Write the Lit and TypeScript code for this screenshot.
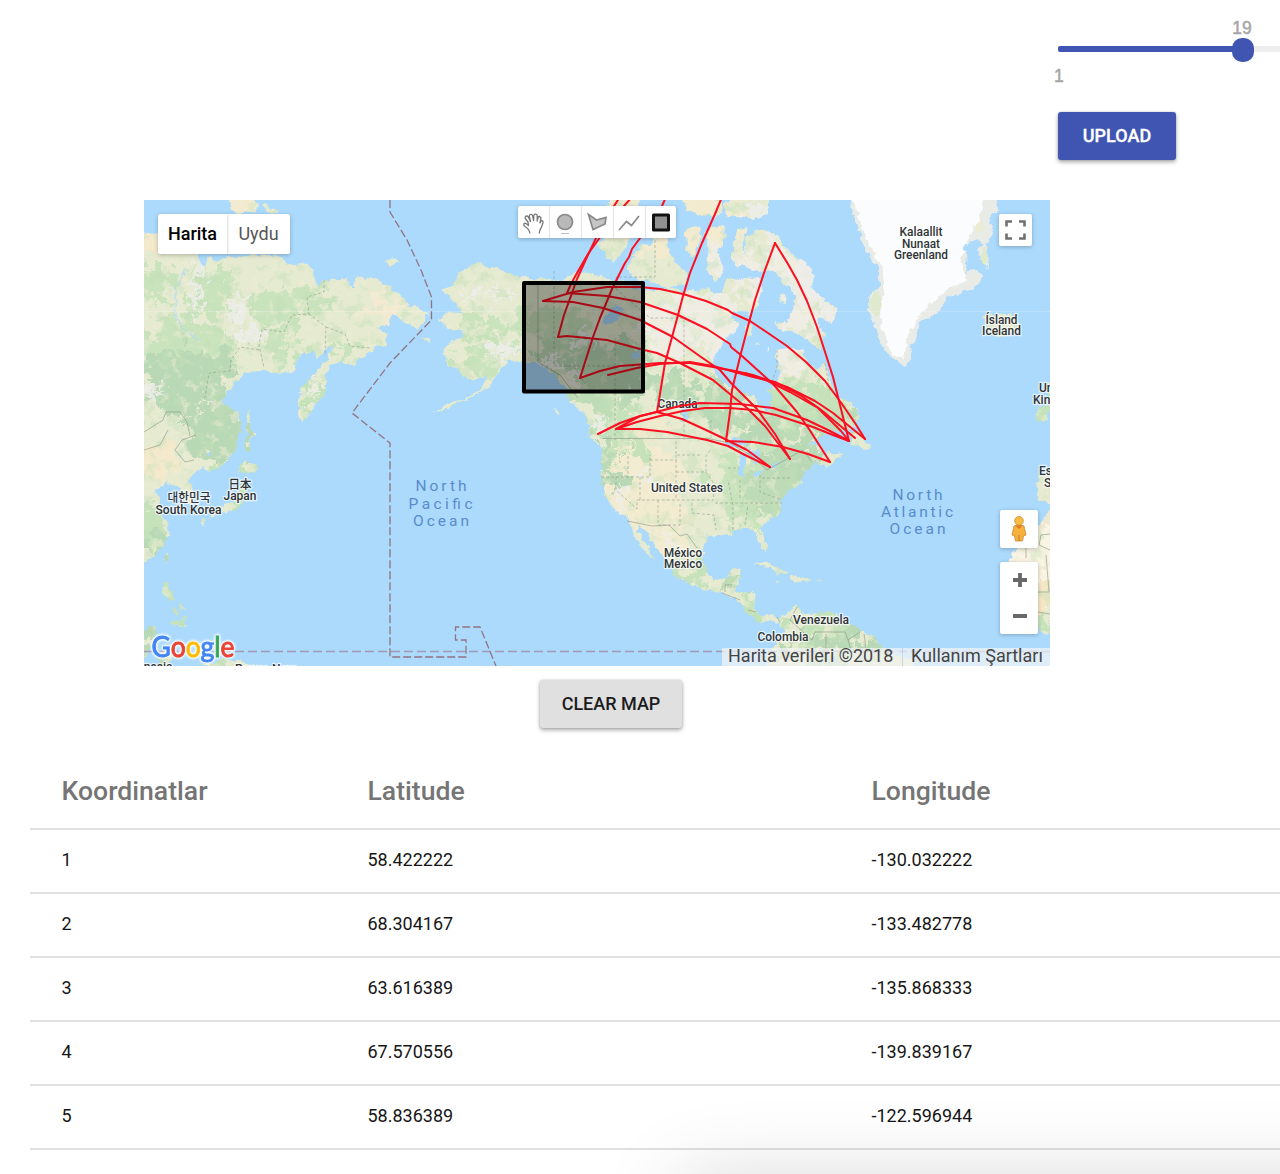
import { LitElement, html, svg, css } from "lit";
import { customElement } from "lit/decorators.js";

type Point = [number, number];

const rows: [number, string, string][] = [
  [1, "58.422222", "-130.032222"],
  [2, "68.304167", "-133.482778"],
  [3, "63.616389", "-135.868333"],
  [4, "67.570556", "-139.839167"],
  [5, "58.836389", "-122.596944"],
];

/* Coastlines, as closed polygons in map units. */
const continents: string[] = [
  // Asia
  "130,228 144,232 158,235 180,250 195,253 198,257 204,267 209,257 214,260 224,258 234,257 257,255 274,255 281,258 287,265 300,263 307,264 314,270 315,280 319,287 322,280 344,280 347,276 350,287 355,287 354,276 374,278 391,288 399,293 407,302 409,308 416,306 428,315 417,330 407,323 400,319 392,315 390,325 377,328 386,333 387,346 377,347 364,357 352,365 341,363 329,365 326,373 326,392 319,400 311,413 302,425 298,414 298,400 301,388 311,377 327,360 332,347 324,350 316,360 314,353 302,353 294,370 282,373 264,371 246,372 232,387 221,402 231,408 239,412 241,430 234,450 224,465 211,472 203,468 194,473 189,480 193,490 194,500 187,504 182,500 180,488 172,483 166,485 168,481 154,490 160,498 160,505 163,515 169,525 168,530 169,535 162,547 154,557 130,568",
  // North America
  "433,413 445,405 463,400 483,387 487,377 475,380 463,377 457,368 447,365 443,352 450,342 463,338 462,330 452,330 437,320 448,312 463,313 453,302 442,290 453,285 457,275 478,261 484,266 497,268 512,274 527,278 547,278 560,282 570,275 583,272 600,275 612,282 623,280 636,289 660,290 670,287 680,291 697,290 708,287 715,295 722,290 728,277 738,280 745,278 760,277 762,285 758,305 750,312 745,310 735,312 731,318 741,323 733,333 722,343 715,357 712,367 717,377 730,387 743,392 755,397 762,408 768,413 772,400 768,390 777,382 780,373 777,363 775,350 793,347 803,352 810,365 817,370 825,363 830,380 837,397 853,403 860,417 858,423 847,430 830,432 815,440 805,447 815,446 822,447 825,455 840,452 843,454 830,467 820,465 815,462 800,478 802,483 790,490 780,500 782,510 770,520 760,528 767,543 766,553 760,545 757,535 750,528 733,530 732,536 722,533 707,538 703,547 703,563 713,580 727,578 730,570 742,568 738,583 735,591 755,592 753,607 762,617 773,615 780,618 797,605 803,613 835,612 843,620 860,630 877,637 882,648 890,653 913,660 920,680 765,680 768,653 773,647 785,630 777,623 770,620 758,622 747,613 740,602 722,593 703,590 673,575 672,567 657,548 643,528 637,526 637,532 647,545 655,562 648,555 637,540 627,518 613,508 603,490 601,477 602,447 590,433 587,417 570,400 563,385 550,372 537,363 523,363 510,360 497,373 490,387 470,398 450,407",
];

const islands: string[] = [
  "246,413 249,409 251,427 254,435 250,441 250,452 245,452 247,430",
  "245,458 251,464 258,467 252,473 244,472 238,475 241,468",
  "244,480 247,492 241,507 232,510 222,513 211,518 210,514 224,505 236,501 239,490",
  "201,517 206,520 204,527 201,525",
  "167,553 169,556 166,564 163,558",
  "164,581 170,582 169,590 175,600 171,602 163,594",
  "181,603 184,607 181,612 178,606", "172,606 178,612 175,615",
  "186,617 186,627 179,628 171,623 178,620",
  "130,636 144,630 151,626 157,630 152,645 144,662 130,668", "158,656 168,650 172,658 166,666 160,666",
  "194,662 210,664 224,658 247,663 262,668 215,668",
  "227,190 248,190 258,205 255,213 245,211 240,216 232,210", "262,204 275,208 279,214 266,212",
  "385,261 395,257 400,262 390,266", "421,337 430,340 431,343 424,341", "554,407 560,412 557,416",
  "592,433 601,443 598,446 588,436",
  // Arctic archipelago
  "597,243 606,237 633,234 628,244 619,257 613,262 604,254",
  "627,272 632,258 641,244 650,246 653,238 664,236 670,250 674,262 687,272 687,283 667,288 654,282 640,280",
  "606,205 620,190 640,190 637,213 615,220",
  "644,214 655,207 672,214 670,229 658,233 646,228",
  "683,232 698,226 702,235 698,245 694,258 685,250 688,242",
  "680,190 720,190 722,214 713,218 700,214 686,210",
  "706,230 724,226 726,236 718,250 722,265 723,274 715,281 707,270 708,255",
  "722,204 735,198 745,190 768,190 768,214 753,219 738,216 728,216",
  "737,230 747,229 742,245 746,265 738,268 731,258",
  "765,230 778,237 786,247 797,258 806,262 815,277 810,287 820,296 837,308 832,323 817,317 819,327 825,333 822,350 810,343 800,335 777,328 775,323 787,322 793,310 795,297 789,286 783,283 773,270 757,272 743,267 746,237 756,230",
  "780,295 786,294 787,303 779,302", "754,345 758,343 759,347", "767,350 770,348 769,353", "753,282 760,290 755,310 748,315",
  "745,325 751,323 752,333 746,340",
  // Newfoundland, Caribbean
  "850,435 858,430 863,438 870,447 867,450 860,447 850,443",
  "753,564 767,562 778,568 788,573 778,574 770,568 758,566", "790,577 797,575 812,580 803,582 790,581", "775,581 781,582 777,583", "818,580 822,581 819,582",
  // Europe, Africa
  "983,316 990,313 994,317 1013,313 1021,328 1003,338 987,333",
  "1040,407 1048,407 1047,420 1035,423 1036,413",
  "1047,383 1064,380 1064,426 1048,410",
  "1038,477 1064,474 1064,504 1047,503 1037,498",
  "1064,504 1048,510 1043,520 1037,528 1027,540 1013,553 1010,563 1011,590 1013,607 1023,620 1033,627 1043,634 1064,632",
];

const greenland =
  "849,186 850,200 853,213 860,233 863,245 868,253 872,263 878,267 880,287 870,293 868,310 875,327 880,343 890,358 907,367 912,347 920,322 937,313 950,297 973,288 986,275 973,270 965,272 968,258 977,250 988,270 987,243 993,230 990,217 998,210 997,200 997,186";

const lakes: string[] = [
  "612,308 617,305 624,310 618,319 606,325 600,321", "631,353 640,350 642,358 633,361",
  "740,455 747,452 745,462 744,476 738,477 740,465", "724,443 735,437 748,444 738,447 728,447", "748,448 760,452 756,465 750,455",
  "752,475 766,469 763,473 756,477", "766,466 780,463 775,468", "680,408 685,404 688,420 684,422",
];

/* Vegetation: [colour, cx, cy, rx, ry]. */
const cover: [string, number, number, number, number][] = [
  ["#c9e3bd", 190, 350, 50, 30], ["#b9d8b5", 188, 374, 45, 24], ["#b9d8b5", 218, 430, 34, 38], ["#b9d8b5", 165, 402, 26, 14],
  ["#c9e3bd", 212, 288, 22, 24], ["#c9e3bd", 272, 310, 32, 16], ["#c9e3bd", 310, 300, 22, 14], ["#c9e3bd", 283, 345, 26, 12],
  ["#c9e3bd", 150, 285, 18, 20], ["#f4e9cb", 150, 240, 40, 12], ["#f4ead2", 385, 303, 22, 12], ["#c5e2ba", 311, 392, 12, 22],
  ["#f4e9cb", 152, 462, 26, 18], ["#c5e2ba", 150, 530, 20, 26], ["#b9d8b5", 151, 548, 12, 8], ["#c9e3bd", 351, 352, 20, 8],
  ["#c9e3bd", 495, 330, 36, 10], ["#c9e3bd", 473, 360, 24, 13], ["#c9e3bd", 555, 325, 35, 20], ["#bddbb6", 570, 352, 38, 18],
  ["#b9d8b5", 610, 362, 35, 24], ["#bddbb6", 600, 396, 24, 24], ["#b9d8b5", 650, 385, 44, 12], ["#c5e2ba", 615, 430, 20, 26],
  ["#efede4", 690, 325, 54, 32], ["#efede4", 788, 360, 18, 18], ["#b9d8b5", 708, 404, 40, 18], ["#b9d8b5", 760, 425, 45, 20],
  ["#c5e2ba", 808, 400, 34, 22], ["#bddbb6", 830, 425, 34, 12], ["#b9d8b5", 790, 460, 36, 20], ["#efe9cd", 655, 426, 24, 9],
  ["#f3ebd0", 645, 485, 40, 48], ["#f3ebd0", 668, 530, 18, 24], ["#c9e3bd", 740, 490, 28, 40], ["#bddbb6", 770, 492, 24, 24],
  ["#b9d8b5", 607, 465, 9, 36], ["#c5e2ba", 635, 450, 10, 14], ["#c5e2ba", 688, 575, 20, 11], ["#bddbb6", 733, 580, 14, 14],
  ["#c5e2ba", 750, 604, 12, 16], ["#c5e2ba", 812, 625, 26, 12], ["#b9d8b5", 850, 648, 44, 16], ["#b9d8b5", 780, 655, 16, 12],
  ["#efede4", 790, 290, 44, 50], ["#f3ebd0", 655, 222, 50, 30], ["#f3ebd0", 700, 220, 50, 30], ["#efede4", 725, 262, 26, 20],
  ["#c5e2ba", 1045, 395, 14, 36], ["#faf4e4", 1035, 570, 34, 52], ["#f6e6c4", 1045, 602, 16, 12], ["#c5e2ba", 1045, 625, 14, 12],
  ["#efe9d2", 1045, 515, 12, 12], ["#c5e2ba", 245, 490, 20, 30], ["#c5e2ba", 172, 605, 26, 40], ["#b9d8b5", 148, 645, 14, 20],
  ["#c5e2ba", 225, 664, 46, 8], ["#f3ebd0", 247, 206, 30, 12],
];

/* Mountain ranges: light rock. */
const ranges: [number, number, number, number][] = [
  [196, 290, 4, 32], [240, 312, 8, 15], [250, 335, 16, 8], [153, 390, 9, 6], [314, 385, 3, 18], [505, 350, 18, 5], [495, 295, 34, 3],
  [548, 362, 22, 5], [583, 340, 12, 8], [600, 425, 6, 10], [806, 280, 14, 20], [828, 312, 10, 10], [773, 237, 8, 7], [757, 210, 14, 10],
  [645, 475, 4, 10], [622, 500, 4, 16], [670, 540, 4, 12], [575, 380, 5, 9],
];

const borders: string[] = [
  "M324 280V292L307 297 309 314 292 315 284 332 262 329 259 345 264 368M309 314L326 327 325 356M326 327L345 334 350 346 370 348M259 350L240 347 231 360 230 371 209 373 205 398",
  "M554 271V366H574L585 384M616 289V277H655V240M616 289L650 318H684V440M615 338V440M645 320V366M567 366H645M711 420V438M777 350V367L771 385M825 363L830 392",
  "M628 456V475M601 477H650V455M640 477V500M616 477V490L637 509V500H713M658 500V525H680V503M676 455V500M650 460H677M676 472H706V456L711 449M706 472L715 485 713 500M692 503V513L714 515 716 530M733 530V505L728 480M745 525L748 505M700 455H676V439M728 468H739M740 480V500M760 475V492L782 500M715 503H782M762 478H790",
];
const solidBorders: string[] = [
  "M602 438.500H708L730 443 750 455 767 470 785 460 803 450 812 462",
  "M627 521L652 526 669 525 680 536 687 534 697 548",
  "M538 281V362L560 375 578 398",
  "M144 432L163 420 166 412 180 412 187 422 190 436M144 450L160 445 168 430M196 435L182 440 175 450 185 462 194 460",
  "M725 592V585H732M722 593L740 600M748 610L756 612M777 617L780 622M797 607L790 620 803 632 812 640M812 640L815 632 845 632 848 640 860 632M826 634V652M848 640L852 654M864 634L866 648",
  "M1026 540V558M1050 534L1041 535 1039 545 1050 550M1046 555L1049 592 1013 592M1038 612L1050 614",
];

const flights: Point[][] = [
  [[722, 197], [715, 214], [702, 243], [690, 273], [683, 296], [678, 315], [665, 363], [657, 412], [682, 419], [706, 430], [727, 440], [747, 450], [770, 467]],
  [[775, 243], [765, 270], [755, 300], [747, 330], [740, 357], [732, 390], [730, 412], [726, 441], [753, 442], [783, 447], [808, 454], [830, 462]],
  [[775, 243], [788, 264], [797, 280], [807, 301], [817, 327], [826, 355], [833, 377], [842, 413], [849, 441]],
  [[543, 301], [573, 292], [607, 287], [640, 287], [660, 289], [683, 294], [706, 301], [728, 310], [732, 313], [750, 321], [765, 331], [787, 346], [806, 362], [825, 381], [842, 404], [855, 423], [865, 439]],
  [[567, 293], [607, 296], [640, 302], [678, 315], [707, 329], [730, 344], [731, 347], [742, 356], [773, 384], [797, 412], [809, 429], [830, 462]],
  [[543, 301], [573, 302], [603, 308], [640, 320], [673, 337], [701, 357], [720, 370], [731, 383], [757, 409], [775, 434], [790, 459]],
  [[558, 337], [567, 336], [607, 340], [640, 349], [657, 353], [680, 363], [713, 380], [731, 395], [747, 408], [765, 426], [790, 459]],
  [[580, 378], [600, 371], [620, 366], [660, 363], [690, 363], [713, 367], [735, 371], [753, 375], [787, 387], [815, 401], [833, 413], [865, 439]],
  [[608, 375], [637, 368], [660, 364], [690, 362], [713, 366], [753, 377], [775, 382], [800, 395], [820, 409], [855, 438]],
  [[745, 373], [768, 381], [790, 392], [818, 408], [841, 431], [849, 441]],
  [[598, 434], [620, 423], [637, 417], [660, 411], [680, 406], [700, 403], [740, 404], [773, 408], [807, 420], [828, 430], [849, 441]],
  [[616, 429], [637, 422], [660, 416], [683, 411], [705, 408], [730, 408], [753, 410], [776, 415], [813, 427], [833, 435], [849, 441]],
  [[657, 412], [640, 416], [616, 429], [640, 429], [667, 432], [707, 440], [728, 446], [745, 455], [770, 467]],
  [[567, 293], [571, 284], [577, 273], [588, 254], [601, 236], [616, 215], [632, 197]],
  [[558, 337], [564, 315], [572, 293], [577, 279], [587, 257], [597, 236], [608, 215], [620, 197]],
  [[580, 378], [593, 337], [600, 318], [612, 289], [625, 263], [629, 257], [632, 249], [643, 234], [652, 223], [662, 206], [666, 197]],
];

/* Place names: [text, centre x, baseline, drawn width]. */
const places: [string, number, number, number][] = [
  ["Kalaallit", 921, 236, 43], ["Nunaat", 921, 247.500, 38], ["Greenland", 921, 259, 54],
  ["Ísland", 1001.500, 323.500, 32], ["Iceland", 1001.500, 335, 39],
  ["Canada", 677.500, 408, 40], ["United States", 687, 491.500, 72],
  ["México", 683, 556.500, 38], ["Mexico", 683, 567.500, 38],
  ["Venezuela", 821, 624, 56], ["Colombia", 783, 641, 51],
  ["日本", 240, 488.500, 23], ["Japan", 240, 500, 33],
  ["대한민국", 189, 502, 43], ["South Korea", 188.500, 514, 66],
];
const edgePlaces: [string, number, number][] = [
  ["United", 1039, 392], ["Kingdom", 1033, 404], ["España", 1039, 475], ["Spain", 1044, 487],
  ["Indonesia", 120, 671], ["Papua New", 235, 673],
];
const oceans: [string, number, number, number][] = [
  ["North", 441, 491, 51], ["Pacific", 440.500, 508.500, 64], ["Ocean", 441, 525.500, 56],
  ["North", 917.500, 499.500, 50], ["Atlantic", 917, 517, 72], ["Ocean", 917.500, 534, 56],
];

const poly = (p: string) => svg`<polygon points=${p}></polygon>`;

@customElement("coordinate-map")
class CoordinateMap extends LitElement {
  static styles = css`
    :host { display: block; position: relative; width: 906px; height: 466px; overflow: hidden; font-family: Roboto, sans-serif; }
    .canvas { display: block; width: 906px; height: 466px; background: #abdafd; }
    filter { color-interpolation-filters: sRGB; }
    .land { fill: #e5ead0; }
    .water { fill: #abdafd; }
    .border { fill: none; stroke: #8f9b8b; stroke-width: .8; stroke-dasharray: 3 2; opacity: .7; }
    .solid { fill: none; stroke: #8f9b8b; stroke-width: .8; opacity: .8; }
    .dateline { fill: none; stroke: #93737f; stroke-width: 1.3; stroke-dasharray: 8 3; }
    .equator { stroke: #a299b3; stroke-width: 1.5; stroke-dasharray: 9 4; }
    .flight { fill: none; stroke: #fb0f20; stroke-width: 2; stroke-linejoin: round; stroke-linecap: round; }
    .area { fill: #000; fill-opacity: .33; stroke: #000; stroke-width: 4; stroke-linejoin: round; }
    .place { font: 500 12px Roboto, "Noto Sans CJK KR", "Noto Sans CJK JP", sans-serif; fill: #2f3437; stroke: #fff; stroke-opacity: .7; stroke-width: 2.500px; paint-order: stroke; stroke-linejoin: round; }
    .ocean { font: 400 15.500px Roboto, sans-serif; fill: #5a8bcb; }
    .brand { font: 400 28.500px Lato, sans-serif; stroke-width: .9px; filter: drop-shadow(0 0 1px #fff) drop-shadow(0 0 1px #fff) drop-shadow(0 0 1px rgba(255, 255, 255, .8)); }
    .b { fill: #4285f4; stroke: #4285f4; }
    .r { fill: #ea4335; stroke: #ea4335; }
    .y { fill: #fbbc05; stroke: #fbbc05; }
    .g { fill: #34a853; stroke: #34a853; }
    .control { position: absolute; display: flex; background: #fff; border-radius: 2px; box-shadow: 0 1px 4px rgba(0, 0, 0, .25); overflow: hidden; }
    .types { left: 14px; top: 14px; width: 132px; height: 40px; font-size: 18px; line-height: 40px; }
    .type { flex: 1; text-align: center; color: #565656; }
    .type.on { flex: 0 0 69px; color: #000; font-weight: 500; box-shadow: 1px 0 2px rgba(0, 0, 0, .15); }
    .tools { left: 374px; top: 6px; width: 158px; height: 32px; }
    .full { left: 855px; top: 14px; width: 33px; height: 32px; }
    .pegman { left: 856px; top: 310px; width: 38px; height: 38px; }
    .zoom { left: 856px; top: 362px; width: 38px; height: 72px; }
    .credits { position: absolute; right: 0; bottom: 0; display: flex; width: 328px; height: 18px; box-sizing: border-box; padding-left: 6px; background: rgba(245, 245, 245, .7); font-size: 18px; line-height: 16px; color: #444; white-space: nowrap; }
    .credit { flex: 0 0 174px; border-right: 1px solid rgba(150, 190, 220, .5); margin-right: 8px; }
  `;

  render() {
    return html`
      <svg class="canvas" viewBox="144 200 906 466">
        <defs>
          <filter id="coast" filterUnits="userSpaceOnUse" x="130" y="186" width="934" height="494">
            <feTurbulence type="fractalNoise" baseFrequency=".16" numOctaves="3" seed="4" result="n"></feTurbulence>
            <feDisplacementMap in="SourceGraphic" in2="n" scale="7" xChannelSelector="R" yChannelSelector="G"></feDisplacementMap>
          </filter>
          <filter id="rough" filterUnits="userSpaceOnUse" x="130" y="186" width="934" height="494">
            <feTurbulence type="fractalNoise" baseFrequency=".055" numOctaves="5" seed="9" result="n"></feTurbulence>
            <feDisplacementMap in="SourceGraphic" in2="n" scale="60" xChannelSelector="R" yChannelSelector="G"></feDisplacementMap>
            <feGaussianBlur stdDeviation=".7"></feGaussianBlur>
          </filter>
          <filter id="rock" filterUnits="userSpaceOnUse" x="130" y="186" width="934" height="494">
            <feTurbulence type="fractalNoise" baseFrequency=".14" numOctaves="3" seed="2" result="n"></feTurbulence>
            <feDisplacementMap in="SourceGraphic" in2="n" scale="34" xChannelSelector="R" yChannelSelector="G"></feDisplacementMap>
            <feGaussianBlur stdDeviation=".7"></feGaussianBlur>
          </filter>
          <filter id="speckle" filterUnits="userSpaceOnUse" x="130" y="186" width="934" height="494">
            <feTurbulence type="fractalNoise" baseFrequency=".07" numOctaves="5" seed="21"></feTurbulence>
            <feColorMatrix values="0 0 0 0 .76  0 0 0 0 .88  0 0 0 0 .72  7 0 0 0 -3.700"></feColorMatrix>
          </filter>
          <filter id="dust" filterUnits="userSpaceOnUse" x="130" y="186" width="934" height="494">
            <feTurbulence type="fractalNoise" baseFrequency=".1" numOctaves="4" seed="33"></feTurbulence>
            <feColorMatrix values="0 0 0 0 .94  0 0 0 0 .93  0 0 0 0 .84  0 7 0 0 -4"></feColorMatrix>
          </filter>
          <clipPath id="shore">${continents.map(poly)}${islands.map(poly)}</clipPath>
        </defs>
        <g filter="url(#coast)">
          <rect class="water" x="130" y="186" width="934" height="494"></rect>
          <g clip-path="url(#shore)">
            <rect class="land" x="130" y="186" width="934" height="494"></rect>
            <g filter="url(#rough)">
              ${cover.map(([c, x, y, rx, ry]) => svg`<ellipse fill=${c} cx=${x} cy=${y} rx=${rx} ry=${ry}></ellipse>`)}
            </g>
            <rect x="130" y="186" width="934" height="494" filter="url(#speckle)" opacity=".4"></rect>
            <rect x="130" y="186" width="934" height="494" filter="url(#dust)" opacity=".5"></rect>
            <g filter="url(#rock)" fill="#eeeeea" opacity=".85">
              ${ranges.map(([x, y, rx, ry]) => svg`<ellipse cx=${x} cy=${y} rx=${rx} ry=${ry}></ellipse>`)}
            </g>
          </g>
          <polygon points=${greenland} fill="#e9ebe6"></polygon>
          <polygon points="851,186 853,200 864,233 874,255 884,270 884,290 880,310 882,330 892,354 904,358 908,335 920,314 936,300 950,288 968,280 960,262 968,240 978,220 984,200 986,186" fill="#fbfcfe"></polygon>
          <ellipse cx="876" cy="303" rx="6" ry="12" fill="#dfe9cd"></ellipse>
          <ellipse cx="984" cy="257" rx="3" ry="9" fill="#e0e9c8"></ellipse>
          <ellipse cx="980" cy="226" rx="5" ry="6" fill="#ecebd6"></ellipse>
          <g class="water">${lakes.map(poly)}
            <polygon points="962,247 975,240 985,244 978,250 972,262 968,260"></polygon>
            <polygon points="206,455 212,452 210,458"></polygon>
          </g>
          <path d="M185 270L176 290 176 320 184 330 198 340" fill="none" stroke="#abdafd" stroke-width="1"></path>
        </g>
        ${borders.map((d) => svg`<path class="border" d=${d}></path>`)}
        ${solidBorders.map((d) => svg`<path class="solid" d=${d}></path>`)}
        <path d="M144 311.500H1050" stroke="#fff" opacity=".2"></path>
        <path class="equator" d="M144 651.500H1050"></path>
        <path class="dateline" d="M390 200V212L407 240 421 270 431.500 297V320L390 363 352 413 390 443V657H466V640H455.500V627H480L496 666"></path>
        ${places.map(([t, x, y, w]) => svg`<text class="place" x=${x - w / 2} y=${y} textLength=${w} lengthAdjust="spacingAndGlyphs">${t}</text>`)}
        ${edgePlaces.map(([t, x, y]) => svg`<text class="place" x=${x} y=${y}>${t}</text>`)}
        ${oceans.map(([t, x, y, w]) => svg`<text class="ocean" x=${x - w / 2} y=${y} textLength=${w}>${t}</text>`)}
        ${flights.map((f) => svg`<polyline class="flight" points=${f.join(" ")}></polyline>`)}
        <rect class="area" x="524" y="283" width="119" height="108.500"></rect>
        <text class="brand" x="151.500" y="657" textLength="83" lengthAdjust="spacingAndGlyphs"><tspan class="b">G</tspan><tspan class="r">o</tspan><tspan class="y">o</tspan><tspan class="b">g</tspan><tspan class="g">l</tspan><tspan class="r">e</tspan></text>
      </svg>

      <div class="control types"><div class="type on">Harita</div><div class="type">Uydu</div></div>

      <div class="control tools">
        <svg width="158" height="32" viewBox="0 0 158 32">
          <path d="M31.500 0V32M63.500 0V32M95.500 0V32M127.500 0V32" stroke="#dfe6ea"></path>
          <path d="M12 27.500C11.500 24.500 9.500 22 7 20.500 5 19 5.500 16.500 8 17.500L10.500 19.500 10 16 7.300 12.500C6.500 10.300 9 9 10.300 11L12.500 15.500 11.300 10.500C11 8 14 7.500 14.600 9.700L15.600 14.500 15.800 9.700C16 7.600 19 7.600 19.200 9.700L19.200 15 20 11.500C20.800 9.800 23.300 10.500 22.900 12.500L22 17 22.800 15.300C24 14 25.300 15 25 16.700L23.500 21 C22.500 23 21.500 24 21.200 27.500" fill="#fff" stroke="#777" stroke-width="1.300" stroke-linejoin="round"></path>
          <circle cx="47" cy="16" r="7.500" fill="#b9b9b9" stroke="#8a8a8a" stroke-width="1.700"></circle>
          <path d="M43 27.500H51" stroke="#bcbcbc"></path>
          <path d="M70.500 8.500L78.500 14 88 11.500 87 18 75 23.500Z" fill="#c6c6c6" stroke="#8a8a8a" stroke-width="1.700"></path>
          <path d="M101 24L108.500 15.500 113.500 19.500 121 10" fill="none" stroke="#8a8a8a" stroke-width="1.700"></path>
          <rect x="135.500" y="9" width="15" height="15" fill="#909090" stroke="#111" stroke-width="3" stroke-linejoin="round"></rect>
        </svg>
      </div>

      <div class="control full">
        <svg width="33" height="32" viewBox="0 0 33 32">
          <path d="M7.500 12.500V7.500H13M20 7.500H25.500V12.500M25.500 19.500V24.500H20M13 24.500H7.500V19.500" fill="none" stroke="#707070" stroke-width="2.600"></path>
        </svg>
      </div>

      <div class="control pegman">
        <svg width="38" height="38" viewBox="0 0 38 38">
          <path d="M14 16Q19 13 24 16L26 25 23.500 26 22.500 31H15.500L14.500 26 12 25Z" fill="#f5b13a" stroke="#c98a35" stroke-width=".8"></path>
          <path d="M15.500 15.500L19 19 22.500 15.500Z" fill="#e8752b"></path>
          <path d="M19 25V31" stroke="#b97a2c"></path>
          <circle cx="19" cy="10.800" r="4.300" fill="#f9bd3f" stroke="#c98a35" stroke-width=".8"></circle>
        </svg>
      </div>

      <div class="control zoom">
        <svg width="38" height="72" viewBox="0 0 38 72">
          <path d="M13 18H27M20 11V25M13 54H27" fill="none" stroke="#686868" stroke-width="3.800"></path>
        </svg>
      </div>

      <div class="credits"><span class="credit">Harita verileri ©2018</span><span>Kullanım Şartları</span></div>
    `;
  }
}

@customElement("app-root")
class AppRoot extends LitElement {
  static styles = css`
    :host { display: flex; flex-direction: column; position: relative; width: 1280px; height: 1174px; overflow: hidden; background: #fff; font-family: Roboto, sans-serif; color: #212121; }
    .side { display: flex; flex-direction: column; height: 200px; margin-left: 1058px; box-sizing: border-box; padding-top: 46px; flex: none; }
    .track { position: relative; height: 6px; background: #eee; border-radius: 3px 0 0 3px; }
    .fill { width: 184px; height: 6px; background: #3f55b1; border-radius: 2px; }
    .thumb { position: absolute; left: 174px; top: -8px; width: 22px; height: 24px; border-radius: 10px; background: #3f55b1; }
    .value, .min { font: 17.500px/20px "Liberation Sans", sans-serif; color: #a6a6a6; -webkit-text-stroke: .5px #a6a6a6; }
    .value { position: absolute; left: 173px; top: -28px; width: 22px; text-align: center; }
    .min { margin: 14px 0 0 -4px; }
    .button { display: flex; align-items: center; justify-content: center; height: 48px; box-sizing: border-box; padding-bottom: 2px; border-radius: 3px; font-weight: 500; font-size: 18px; white-space: nowrap; box-shadow: 0 2px 4px rgba(0, 0, 0, .35), 0 0 2px rgba(0, 0, 0, .15); }
    .upload { width: 118px; margin-top: 26px; color: #fff; background: #3f55b1; -webkit-text-stroke: .3px #fff; }
    .clear { flex: none; width: 142px; margin: 14px 0 0 540px; color: #1c1c1c; background: #e0e0e0; }
    coordinate-map { flex: none; margin-left: 144px; }
    .table { margin: 24px 0 0 30px; }
    .row { display: grid; grid-template-columns: 306px 504px 1fr; align-items: center; height: 64px; box-sizing: border-box; padding: 0 0 3px 31.500px; border-bottom: 2px solid #e0e0e0; font-size: 18px; color: #161616; }
    .head { height: 78px; padding-bottom: 0; font-size: 26.600px; font-weight: 500; color: #757575; }
    .dock { position: absolute; left: 700px; top: 1200px; width: 700px; height: 80px; box-shadow: 0 0 84px 20px rgba(0, 0, 0, .16); }
  `;

  render() {
    return html`
      <div class="side">
        <div class="track">
          <div class="fill"></div>
          <div class="thumb"></div>
          <div class="value">19</div>
        </div>
        <div class="min">1</div>
        <div class="button upload">UPLOAD</div>
      </div>
      <coordinate-map></coordinate-map>
      <div class="button clear">CLEAR MAP</div>
      <div class="table">
        <div class="row head"><span>Koordinatlar</span><span>Latitude</span><span>Longitude</span></div>
        ${rows.map(([n, lat, lng]) => html`<div class="row"><span>${n}</span><span>${lat}</span><span>${lng}</span></div>`)}
      </div>
      <div class="dock"></div>
    `;
  }
}
